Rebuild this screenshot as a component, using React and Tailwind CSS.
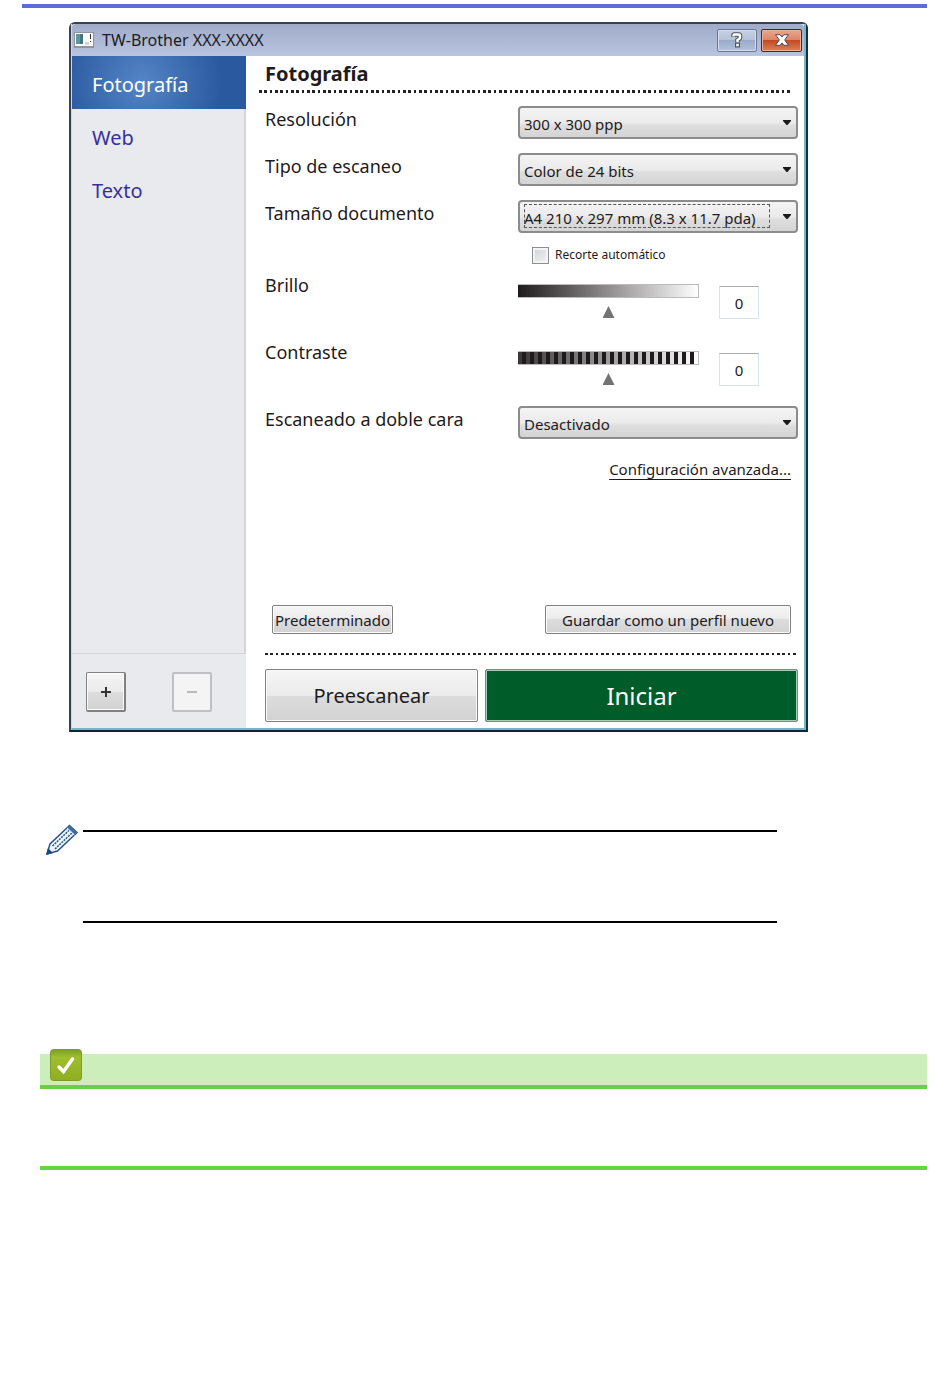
import { useState } from 'react';

const profiles = ['Fotografía', 'Web', 'Texto'];

const dots =
  'bg-[repeating-linear-gradient(90deg,#222_0_3px,transparent_3px_5px,#222_5px_8px,transparent_8px_11px,#222_11px_13px,transparent_13px_16px)]';

const face =
  'border border-[#808080] bg-[linear-gradient(#f5f5f5,#ebebeb_50%,#dddddd_50%,#d2d2d2)] shadow-[inset_0_0_0_1px_#fbfbfb]';

function Select({ id, value, focused }) {
  return (
    <div className="relative w-[280px]">
      <select
        id={id}
        defaultValue={value}
        className="block h-[33px] w-full appearance-none rounded border-2 border-[#8c8c8c] bg-[linear-gradient(#f4f4f4,#ebebeb_50%,#dedede_60%,#d4d4d4)] pt-0.5 pl-1 text-[15px] leading-6 outline-none"
      >
        <option>{value}</option>
      </select>
      {focused && (
        <span className="pointer-events-none absolute top-1 left-1.5 h-6 w-[246px] border border-dashed border-[#555]" />
      )}
      <svg className="pointer-events-none absolute top-3.5 right-1.5" width="10" height="6" viewBox="0 0 10 6" aria-hidden="true">
        <path d="M1 0h8v1L5.500 5h-1L1 1z" fill="#1a1a1a" />
      </svg>
    </div>
  );
}

function Row({ id, label, children }) {
  return (
    <div className="flex items-start justify-between">
      <label htmlFor={id} className="text-lg leading-[26px]">{label}</label>
      {children}
    </div>
  );
}

function Level({ id, label, track }) {
  const [value, setValue] = useState(0);

  return (
    <div className="flex h-[67px] items-start justify-between">
      <label htmlFor={id} className="text-lg leading-[26px]">{label}</label>
      <div className="flex w-[280px] gap-5 pt-3">
        <div className="w-[181px]">
          <div className={`h-3.5 border border-l-0 border-[#bbb] ${track}`} />
          <input
            id={id}
            type="range"
            min="-50"
            max="50"
            value={value}
            onChange={(e) => setValue(Number(e.target.value))}
            className="mt-2 block h-3 w-full appearance-none bg-transparent outline-none [&::-webkit-slider-thumb]:h-3 [&::-webkit-slider-thumb]:w-3 [&::-webkit-slider-thumb]:appearance-none [&::-webkit-slider-thumb]:bg-[#737373] [&::-webkit-slider-thumb]:[clip-path:polygon(50%_0,100%_100%,0_100%)]"
          />
        </div>
        <input
          type="text"
          aria-label={label}
          value={value}
          onChange={(e) => setValue(Number(e.target.value) || 0)}
          className="mt-0.5 h-[33px] w-10 border border-[#dde3ec] border-t-[#abadb3] text-center text-[15px] outline-none"
        />
      </div>
    </div>
  );
}

function TitleBar() {
  return (
    <div className="flex h-8 items-center rounded-t bg-[linear-gradient(#9fabc8,#b9c4e0)] pr-0.5 pl-0.5">
      <svg width="20" height="16" viewBox="0 0 20 16" aria-hidden="true">
        <path d="M0 0h20v16H0z" fill="#8f959f" />
        <path d="M1 1h18v13H1z" fill="#fafafa" />
        <path d="M2 2h7v10H2z" fill="#5b9a9c" />
        <path d="M6 2h3v10H6z" fill="#477483" />
        <path d="M11 10h4v3h-4z" fill="#d5d5d5" />
        <path d="M16 2h1v5h-1zM16 9h1v1h-1z" fill="#333" />
      </svg>
      <h1 className="ml-2 flex-1 text-base text-[#1c1c24]">TW-Brother XXX-XXXX</h1>
      <button
        aria-label="Ayuda"
        className="grid h-[23px] w-10 place-items-center rounded-xs border border-[#6a7894] bg-[linear-gradient(#c6d0e3,#b5c1d8_50%,#9aabc8_50%,#b3c1dc)] shadow-[inset_0_0_0_1px_#d4dced]"
      >
        <svg width="12" height="16" viewBox="0 0 12 16" fill="none" aria-hidden="true">
          <path d="M2.500 5V3.500q0-1 1-1h4q1.500 0 1.500 1.500v1.500q0 1-1 1.500l-1.500 1v2" stroke="#4c5362" strokeWidth="4.500" />
          <path d="M4 10.500h5v5H4z" fill="#4c5362" />
          <path d="M2.500 4.500V3.500q0-1 1-1h4q1.500 0 1.500 1.500v1.500q0 1-1 1.500l-1.500 1v2" stroke="#fff" strokeWidth="2.500" />
          <path d="M5.200 11.700h2.600v2.600H5.200z" fill="#fff" />
        </svg>
      </button>
      <button
        aria-label="Cerrar"
        className="ml-1 grid h-[23px] w-[41px] place-items-center rounded-xs border border-[#5a1f24] bg-[linear-gradient(#e8a890,#dc8264_50%,#c44a25_50%,#da8255)] shadow-[inset_0_0_0_1px_#eab29b]"
      >
        <svg width="16" height="12" viewBox="0 0 16 12" fill="#fff" stroke="#544a55" aria-hidden="true">
          <path d="M1.500 .7h4.500l2 2.300 2-2.300h4.500L10.700 6l3.800 5.300H10L8 9l-2 2.300H1.500L5.300 6z" />
        </svg>
      </button>
    </div>
  );
}

function Sidebar() {
  const [active, setActive] = useState('Fotografía');

  return (
    <aside className="flex w-[174px] shrink-0 flex-col bg-[#e9eaee]">
      <nav className="flex-1 border-r-2 border-b border-[#d5d5d7]">
        {profiles.map((name) => (
          <button
            key={name}
            onClick={() => setActive(name)}
            className={`-mr-0.5 block h-[53px] w-[174px] pt-1 pl-5 text-left text-xl ${
              name === active
                ? 'bg-[radial-gradient(circle_at_40%_50%,#5485c6,#2a599f_75%)] text-white'
                : 'text-[#37309c]'
            }`}
          >
            {name}
          </button>
        ))}
      </nav>
      <div className="flex h-[74px] gap-[46px] pt-[18px] pl-3.5">
        <button
          aria-label="Añadir perfil"
          className={`grid size-10 place-items-center rounded-xs border-r-2 border-b-2 ${face}`}
        >
          <svg width="10" height="10" viewBox="0 0 10 10" aria-hidden="true">
            <path d="M4 0h2v4h4v2H6v4H4V6H0V4h4z" fill="#333" />
          </svg>
        </button>
        <button
          aria-label="Eliminar perfil"
          disabled
          className="grid size-10 place-items-center rounded-xs border-2 border-[#bfc0c3] bg-[#f4f4f4]"
        >
          <svg width="10" height="2" viewBox="0 0 10 2" aria-hidden="true">
            <path d="M0 0h10v2H0z" fill="#bbb" />
          </svg>
        </button>
      </div>
    </aside>
  );
}

function ScanDialog() {
  return (
    <section className="mt-3.5 mr-4 ml-[69px] max-w-[739px] rounded-t-md border-2 border-[#3a4252] border-r-[#12303d] border-b-[#0b2632] bg-white text-[#1f1a1c]">
      <div className="border-r-2 border-b-2 border-l border-[#79b4c8] border-l-[#cfd6e4]">
        <TitleBar />
        <div className="flex">
          <Sidebar />
          <div className="flex flex-1 flex-col pt-1 pr-1.5 pb-1.5 pl-[19px]">
            <h2 className="text-xl leading-7 font-bold">Fotografía</h2>
            <div className={`mt-0.5 mr-2 -ml-1.5 h-[3px] ${dots}`} />

            <div className="mt-[13px] flex flex-col gap-3.5">
              <Row id="resolucion" label="Resolución">
                <Select id="resolucion" value="300 x 300 ppp" />
              </Row>
              <Row id="tipo" label="Tipo de escaneo">
                <Select id="tipo" value="Color de 24 bits" />
              </Row>
              <Row id="tamano" label="Tamaño documento">
                <Select id="tamano" value="A4 210 x 297 mm (8.3 x 11.7 pda)" focused />
              </Row>
            </div>

            <div className="mt-3 flex justify-end">
              <label className="flex h-5 w-[266px] items-center gap-1.5 text-xs">
                <input
                  type="checkbox"
                  className="size-[17px] appearance-none border border-[#8e8f8f] bg-[linear-gradient(135deg,#cfd1d4,#f4f4f4)] shadow-[inset_0_0_0_2px_#f4f4f4] checked:bg-[#4a6a9a]"
                />
                Recorte automático
              </label>
            </div>

            <div className="mt-[7px]">
              <Level id="brillo" label="Brillo" track="bg-[linear-gradient(90deg,#1f1a1c,#fff)]" />
              <Level
                id="contraste"
                label="Contraste"
                track="bg-[repeating-linear-gradient(90deg,transparent_0_4px,#1f1a1c_4px_8px),linear-gradient(90deg,#3a3638,#fff)]"
              />
              <Row id="doble" label="Escaneado a doble cara">
                <Select id="doble" value="Desactivado" />
              </Row>
            </div>

            <div className="mt-[18px] mr-[7px] text-right">
              <a href="#avanzada" className="text-[15px] leading-6 underline underline-offset-4">
                Configuración avanzada...
              </a>
            </div>

            <div className="mt-[124px] mr-[7px] ml-[7px] flex justify-between">
              <button className={`h-[29px] w-[121px] rounded-xs text-[15px] leading-6 ${face}`}>Predeterminado</button>
              <button className={`h-[29px] w-[246px] rounded-xs text-[15px] leading-6 ${face}`}>
                Guardar como un perfil nuevo
              </button>
            </div>

            <div className={`mt-[19px] h-0.5 ${dots}`} />

            <div className="mt-3.5 flex gap-[7px]">
              <button className={`h-[53px] w-[213px] rounded-xs text-xl ${face}`}>Preescanear</button>
              <button className="h-[53px] flex-1 rounded-xs border border-[#7f8a82] bg-[#005c28] text-2xl text-white shadow-[inset_0_0_0_1px_#a9cdb4]">
                Iniciar
              </button>
            </div>
          </div>
        </div>
      </div>
    </section>
  );
}

function Note() {
  return (
    <section className="mt-[91px] mr-4 ml-[45px] flex max-w-[732px] gap-1">
      <svg className="shrink-0" width="34" height="34" viewBox="0 0 34 34" fill="none" aria-hidden="true">
        <path d="M2 31L5 21 24.500 2.500L32 9.500L12.500 28z" fill="#eef4fa" stroke="#29588c" strokeWidth="1.500" />
        <path d="M7.500 23L26 5.500M10 26L29 8" stroke="#29588c" strokeWidth="1.500" strokeDasharray="2 1" />
        <path d="M24.500 2L32.500 9.500l-2.500 2.500-8-7.500z" fill="#3f6da0" />
        <path d="M22 5l7.500 7" stroke="#c8daec" />
        <path d="M1 32l2-7 5 5z" fill="#1c4a7c" />
      </svg>
      <div className="mt-[7px] h-[93px] flex-1 border-y-2 border-black" />
    </section>
  );
}

function RelatedInfo() {
  return (
    <section className="mt-[126px] ml-10">
      <div className="relative h-10 pt-[5px]">
        <div className="h-full border-b-4 border-[#6cce48] bg-[#cbeebb]" />
        <svg className="absolute top-0 left-2.5" width="32" height="32" viewBox="0 0 32 32" aria-hidden="true">
          <defs>
            <linearGradient id="badge" x1="0" y1="0" x2="0" y2="1">
              <stop offset="0" stopColor="#789d2b" />
              <stop offset=".25" stopColor="#9fbe2e" />
              <stop offset="1" stopColor="#8fae20" />
            </linearGradient>
          </defs>
          <rect x=".5" y=".5" width="31" height="31" rx="3" fill="url(#badge)" stroke="#7e9a35" />
          <path d="M9 18l4.500 4.500L22.500 10" fill="none" stroke="#fff" strokeWidth="3.500" strokeLinecap="round" />
        </svg>
      </div>
      <div className="mt-[77px] h-1 bg-[#66d43c]" />
    </section>
  );
}

export default function App() {
  return (
    <main className="min-h-screen bg-white pt-1 pr-[23px] font-['Noto_Sans','Open_Sans',sans-serif]">
      <div className="ml-[22px] h-1 bg-[#5b6dd6]" />
      <ScanDialog />
      <Note />
      <RelatedInfo />
    </main>
  );
}
